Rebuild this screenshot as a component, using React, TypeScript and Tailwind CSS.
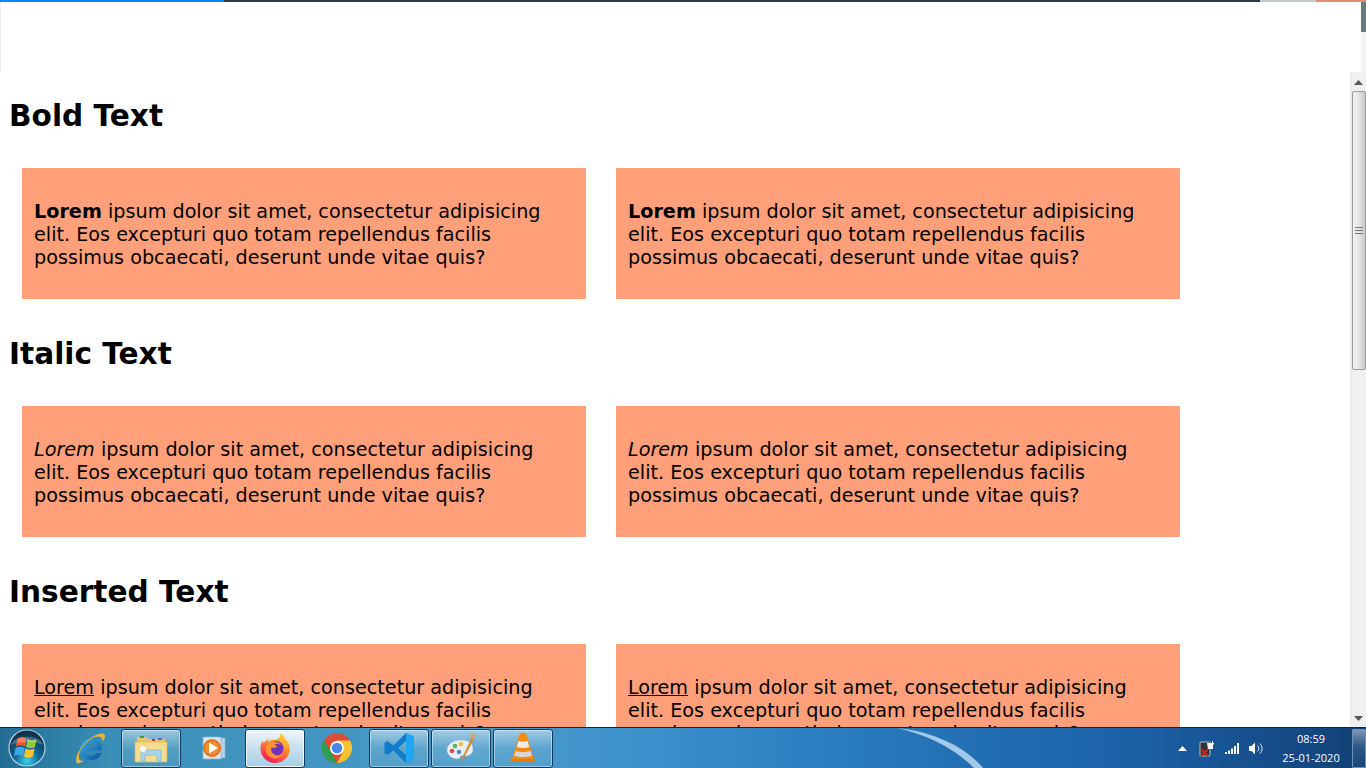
const LOREM = ' ipsum dolor sit amet, consectetur adipisicing elit. Eos excepturi quo totam repellendus facilis possimus obcaecati, deserunt unde vitae quis?'

function Card({ children }: { children: React.ReactNode }) {
  return (
    <div className="w-[564px] h-[131px] shrink-0 bg-[#ffa07a] px-3 pt-[32px] pb-[30px] text-[19.2px] leading-[23px] text-black">
      {children}
      {LOREM}
    </div>
  )
}

function Section({ title, children }: { title: string; children: React.ReactNode }) {
  return (
    <section className="h-[238px] shrink-0 pt-[25px]">
      <h2 className="h-[39px] pl-[9px] text-[29.6px] leading-[39px] font-bold text-black">{title}</h2>
      <div className="mt-[32px] flex gap-[30px] pl-[22px]">
        <Card>{children}</Card>
        <Card>{children}</Card>
      </div>
    </section>
  )
}

function Scrollbar() {
  return (
    <div className="w-4 shrink-0 flex flex-col items-center bg-[#f0f0f0] border-l border-[#e8e8e8]">
      <div className="h-[18px] flex items-center justify-center mt-[1px]">
        <svg width="9" height="5" viewBox="0 0 9 5"><path d="M0 5 4.500 0 9 5z" fill="#555" /></svg>
      </div>
      <div className="w-[14px] h-[279px] flex items-center justify-center border border-[#9a9a9a] rounded-[2px] bg-[linear-gradient(90deg,#f2f2f2,#e6e6e6_45%,#c9c9c9)]">
        <div className="w-2 h-[7px] border-y border-[#777] flex items-center">
          <div className="w-full h-px bg-[#777]" />
        </div>
      </div>
      <div className="flex-1" />
      <div className="h-[18px] flex items-center justify-center">
        <svg width="9" height="5" viewBox="0 0 9 5"><path d="M0 0 4.500 5 9 0z" fill="#555" /></svg>
      </div>
    </div>
  )
}

function StartOrb() {
  return (
    <svg width="38" height="38" viewBox="0 0 38 38">
      <defs>
        <radialGradient id="orb" cx="50%" cy="85%" r="75%">
          <stop offset="0" stopColor="#3fd0e6" />
          <stop offset="0.45" stopColor="#12689a" />
          <stop offset="1" stopColor="#10324c" />
        </radialGradient>
      </defs>
      <circle cx="19" cy="19" r="18" fill="url(#orb)" stroke="#b4d0df" strokeWidth="1.200" />
      <path d="M9.500 9.500c3-1.700 6-1.700 9 0l-1.500 8c-3-1.700-6-1.700-9 0z" fill="#f0592b" />
      <path d="M19.500 10c3 1.700 6 1.700 9 0l-1.500 8c-3 1.700-6 1.700-9 0z" fill="#8fc93e" />
      <path d="M7.500 19c3-1.700 6-1.700 9 0L15 27c-3-1.700-6-1.700-9 0z" fill="#3fa6e6" />
      <path d="M17.500 19.500c3 1.700 6 1.700 9 0L25 27.500c-3 1.700-6 1.700-9 0z" fill="#fac32d" />
      <path d="M3 16C6 5 32 5 35 16 27 12 11 12 3 16z" fill="#fff" opacity=".22" />
    </svg>
  )
}

function IeIcon() {
  return (
    <svg width="32" height="32" viewBox="0 0 32 32">
      <defs>
        <linearGradient id="ie" x1="0" y1="0" x2="1" y2="1">
          <stop offset="0" stopColor="#39b4ea" />
          <stop offset="1" stopColor="#0d4f9c" />
        </linearGradient>
      </defs>
      <path d="M24 18.500H11.500c.4 3 2.500 5 5.500 5 2 0 3.500-1 4.500-2.500h6c-1.500 4.500-5.500 7-10.500 7-6.500 0-11-4.500-11-10.500S10.500 6.500 17 6.500c7 0 11.500 5 11 12zM11.800 14.500h11c-.4-2.700-2.800-4.300-5.500-4.300s-5 1.600-5.500 4.300z" fill="url(#ie)" />
      <path d="M3 31C-1 27 8 11 19 4.500 25 1 30 .5 31 3c.7 2-1 4.500-2.500 6.500 0-2.800-1.200-5-4.500-5C15 4.500 3.500 19 5 26.500c.4 2 2.500 2.800 5 2-2.500 2.200-5.500 3.500-7 2.500z" fill="#e9b63c" />
    </svg>
  )
}

function ExplorerIcon() {
  return (
    <svg width="34" height="30" viewBox="0 0 34 30">
      <path d="M3 4h10l2 2h16v6H3z" fill="#e9c46c" />
      <rect x="6" y="3" width="4" height="2" fill="#2f9e44" />
      <rect x="18" y="6" width="3" height="2" fill="#c0392b" />
      <rect x="24" y="5" width="4" height="2" fill="#2f80c8" />
      <path d="M1 9h32v19c0 1-1 1-1 1H2s-1 0-1-1z" fill="#f5dc8c" stroke="#d8b75e" strokeWidth=".7" />
      <path d="M7 17h20v11h-4v-6H11v6H7z" fill="#a8d4e8" stroke="#7fb4cf" strokeWidth=".7" />
      <circle cx="9" cy="16" r="3" fill="#fff" opacity=".9" />
    </svg>
  )
}

function MediaIcon() {
  return (
    <svg width="28" height="28" viewBox="0 0 28 28">
      <rect x="8" y="4" width="18" height="20" fill="#b9d3e6" stroke="#8fb1c9" strokeWidth=".7" />
      <rect x="4" y="3" width="18" height="22" rx="1" fill="#d7e5ef" stroke="#8fb1c9" strokeWidth=".7" />
      <circle cx="13" cy="14" r="9" fill="#e8701f" />
      <circle cx="13" cy="14" r="7" fill="#f48c2e" />
      <path d="M10 8.500 19 14l-9 5.500z" fill="#fff" />
    </svg>
  )
}

function FirefoxIcon() {
  return (
    <svg width="32" height="32" viewBox="0 0 32 32">
      <defs>
        <linearGradient id="ff" x1="0.800" y1="0" x2="0.300" y2="1">
          <stop offset="0" stopColor="#ffd93b" />
          <stop offset="0.45" stopColor="#ff8a2a" />
          <stop offset="0.8" stopColor="#ff3f4e" />
          <stop offset="1" stopColor="#e3175f" />
        </linearGradient>
      </defs>
      <path d="M30 12c1 3 1 6.500 0 9.500-2 5.500-7.500 9.500-14 9.500C8 31 1.500 24.500 1.500 16.500c0-3 .8-5.500 2-7.500.3 1 .8 1.800 1.500 2.300C6 9 8 7.500 10 7c-1 1-1.500 2-1.600 3 2-1.500 5-2.500 8-2.500 2-.3 3.500-1 4.500-3 .5-1.500.6-2.800.6-3.500 3 2 4.500 4 5 6.500C28.500 9 29.500 10.500 30 12z" fill="url(#ff)" />
      <circle cx="17" cy="16.500" r="7.500" fill="#7333b8" />
      <path d="M7 14c2-3.500 6.500-5 10.500-4 2 .5 3.500 1.500 4.500 3-2.500-1.500-5-1.500-6.500-.7l2.500 2.200c-1 1.500-4 1.500-5.500 1-1 2.500 0 6 4 7.500 3 1 6 0 8-2-2 5-7.500 7-12.500 4.500C8 23.500 5.500 18.500 7 14z" fill="#ff9330" />
    </svg>
  )
}

function ChromeIcon() {
  return (
    <svg width="30" height="30" viewBox="0 0 30 30">
      <circle cx="15" cy="15" r="15" fill="#dd4b39" />
      <path d="M15 30A15 15 0 0 1 2 7.500L9 19l6 11z" fill="#2e9e4f" />
      <path d="M15 30A15 15 0 0 0 28 7.500H15l6 11.500z" fill="#f7c42f" />
      <circle cx="15" cy="15" r="7" fill="#fff" />
      <circle cx="15" cy="15" r="5.300" fill="#4a86e8" />
    </svg>
  )
}

function VsCodeIcon() {
  return (
    <svg width="32" height="32" viewBox="0 0 32 32">
      <path d="M23 1 10.500 13.500 4.500 9 1.500 10.500v11l3 1.500 6-4.500L23 31l8-3.500v-23zM23 9v14l-8-7z" fill="#0f7ccc" />
      <path d="M23 1l8 3.500v23L23 31z" fill="#22a6f2" />
    </svg>
  )
}

function PaintIcon() {
  return (
    <svg width="32" height="32" viewBox="0 0 32 32">
      <path d="M2 18c0-6 7-10 14-10s12 3 12 9c0 4-3 7-7 7-2 0-3-1-5 0-1 .5-1 3-3 3-6 0-11-4-11-9z" fill="#e8eef3" stroke="#aebfcc" strokeWidth=".6" />
      <circle cx="7" cy="19" r="2.300" fill="#d9534f" />
      <circle cx="10" cy="14" r="2.300" fill="#5fb55f" />
      <circle cx="16" cy="12" r="2.300" fill="#e8c13a" />
      <circle cx="14" cy="20" r="2.300" fill="#4a90c8" />
      <path d="M27 5 17 26l-1.500 4 2.800-3L29 7z" fill="#d98a2b" />
      <path d="M25 3c1-2 4-2 5-1 .5 2-.5 4-1.500 5.500L25.500 6z" fill="#c9a878" />
    </svg>
  )
}

function VlcIcon() {
  return (
    <svg width="28" height="32" viewBox="0 0 28 32">
      <path d="M1 29c0-1 1-2 2-2h22c1 0 2 1 2 2v1H1z" fill="#e57a0c" />
      <path d="M11 1h6l8 26H3z" fill="#f58a0b" />
      <path d="M9.500 9c3 1 6 1 9 0l1.800 6c-4 1.300-8.600 1.300-12.600 0z" fill="#ececec" />
      <path d="M6.500 19c5 1.500 10 1.500 15 0l1.500 5c-6 1.500-12 1.500-18 0z" fill="#d6d6d6" />
    </svg>
  )
}

function TaskButton({ kind, className, children }: { kind: 'open' | 'active' | 'plain'; className: string; children: React.ReactNode }) {
  const look = {
    open: 'border border-[#0f3a5c] rounded-[3px] shadow-[inset_0_0_0_1px_rgba(255,255,255,0.45)] bg-[linear-gradient(180deg,rgba(255,255,255,0.5),rgba(255,255,255,0.12)_50%,rgba(255,255,255,0.06))]',
    active: 'border border-[#0f3a5c] rounded-[3px] shadow-[inset_0_0_0_1px_rgba(255,255,255,0.8)] bg-[linear-gradient(180deg,rgba(255,255,255,0.92),rgba(255,255,255,0.7)_50%,rgba(255,255,255,0.55))]',
    plain: '',
  }[kind]
  return <div className={`h-[39px] shrink-0 flex items-center justify-center ${look} ${className}`}>{children}</div>
}

function Tray() {
  return (
    <div className="ml-auto flex items-center h-full text-white">
      <svg width="9" height="5" viewBox="0 0 9 5" className="mr-[12px]"><path d="M0 5 4.500 0 9 5z" fill="#fff" /></svg>
      <svg width="16" height="17" viewBox="0 0 16 17" className="mr-[10px]">
        <rect x="1" y="2" width="10" height="14" rx="1" fill="#333" stroke="#ddd" strokeWidth=".8" />
        <path d="M8 3h5V1h1v2h1v1.500h-1V9h-5z" fill="#fff" />
        <path d="M2 9l7 7M9 9l-7 7" stroke="#e01818" strokeWidth="2" />
      </svg>
      <svg width="15" height="11" viewBox="0 0 15 11" className="mr-[9px]">
        <rect x="0" y="9" width="2" height="2" fill="#fff" />
        <rect x="3" y="7.500" width="2" height="3.500" fill="#fff" />
        <rect x="6" y="5.500" width="2" height="5.500" fill="#fff" />
        <rect x="9" y="3" width="2" height="8" fill="#fff" />
        <rect x="12" y="0" width="2" height="11" fill="#fff" />
      </svg>
      <svg width="15" height="13" viewBox="0 0 15 13" className="mr-[6px]">
        <path d="M0 4h2.500L6 .5v12L2.500 9H0z" fill="#fff" />
        <path d="M8.500 3.500a4 4 0 0 1 0 6M11 1.500a7 7 0 0 1 0 10" fill="none" stroke="#dfe9f2" strokeWidth="1" />
      </svg>
      <div className="w-[82px] text-center text-[11px] leading-[19px] font-['Open_Sans',sans-serif]">
        <div>08:59</div>
        <div>25-01-2020</div>
      </div>
      <div className="w-[14px] h-[39px] border border-[#6b93b3] rounded-[1px] bg-[linear-gradient(180deg,rgba(255,255,255,0.45),rgba(255,255,255,0.12)_45%,rgba(255,255,255,0.03))]" />
    </div>
  )
}

function Taskbar() {
  return (
    <div className="relative h-[41px] shrink-0 flex items-center border-t border-[#0e2a40] overflow-hidden bg-[linear-gradient(90deg,#226d94_0%,#3a8fb8_8%,#4a9bc8_35%,#3f93cc_45%,#2a7fc1_60%,#2370b5_70%,#1c62a8_82%,#164f8d_92%,#123f74_100%)]">
      <svg width="90" height="41" viewBox="0 0 90 41" className="absolute left-[897px] top-0">
        <path d="M0 0C28 6 58 20 78 41h9C66 16 32 3 0 0z" fill="#b9d8f2" opacity=".85" />
      </svg>
      <div className="relative w-[54px] flex items-center justify-center shrink-0 mr-[6px]"><StartOrb /></div>
      <div className="relative w-[60px] flex items-center justify-center shrink-0 mr-px"><IeIcon /></div>
      <div className="relative flex items-center w-full h-full">
        <TaskButton kind="open" className="w-[60px]"><ExplorerIcon /></TaskButton>
        <TaskButton kind="plain" className="w-[64px]"><MediaIcon /></TaskButton>
        <TaskButton kind="active" className="w-[60px]"><FirefoxIcon /></TaskButton>
        <TaskButton kind="plain" className="w-[64px]"><ChromeIcon /></TaskButton>
        <TaskButton kind="open" className="w-[60px] mr-[2px]"><VsCodeIcon /></TaskButton>
        <TaskButton kind="open" className="w-[60px] mr-[2px]"><PaintIcon /></TaskButton>
        <TaskButton kind="open" className="w-[60px]"><VlcIcon /></TaskButton>
        <Tray />
      </div>
    </div>
  )
}

export default function App() {
  return (
    <div className="w-[1366px] h-[768px] overflow-hidden flex flex-col bg-white font-['DejaVu_Sans',Verdana,sans-serif]">
      <div className="h-[2px] shrink-0 flex">
        <div className="w-[224px] bg-[#0a84ff]" />
        <div className="w-[1036px] bg-[#2c3a42]" />
        <div className="w-[56px] bg-[#c4c8ca]" />
        <div className="flex-1 bg-[#e58a78]" />
      </div>
      <div className="h-[70px] shrink-0 flex">
        <div className="flex-1 bg-white border-l border-[#f0f0f0]" />
        <div className="w-[5px] flex flex-col">
          <div className="h-[30px] bg-[#6b7880]" />
          <div className="flex-1 bg-[#f4f4f4]" />
        </div>
      </div>
      <div className="flex-1 min-h-0 flex">
        <main className="flex-1 overflow-hidden">
          <Section title="Bold Text"><strong>Lorem</strong></Section>
          <Section title="Italic Text"><em>Lorem</em></Section>
          <Section title="Inserted Text"><ins>Lorem</ins></Section>
        </main>
        <Scrollbar />
      </div>
      <Taskbar />
    </div>
  )
}
